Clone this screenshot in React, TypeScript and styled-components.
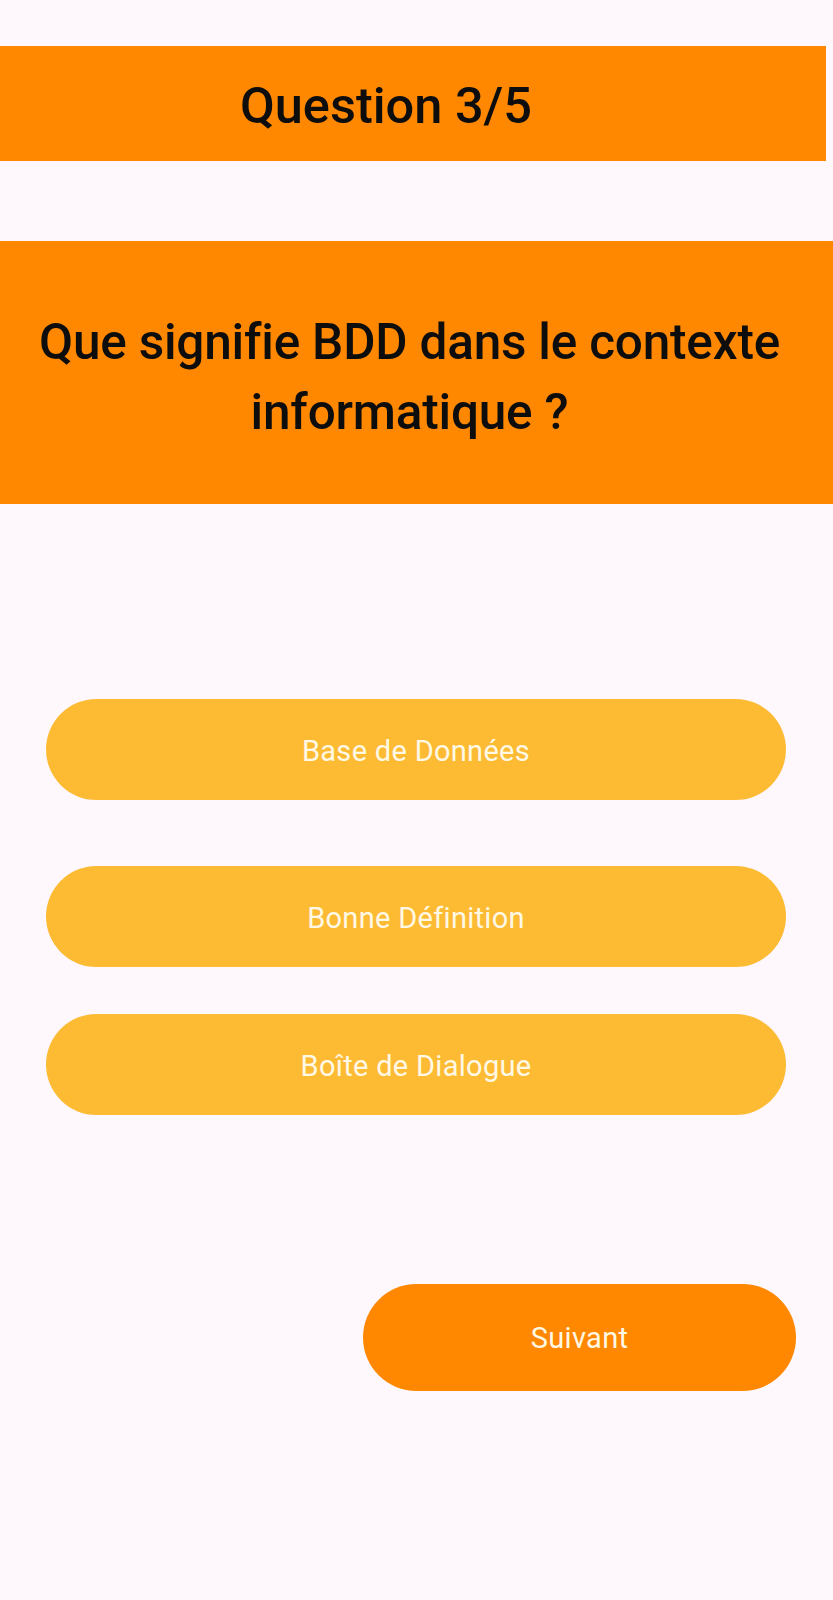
import React from "react";
import styled, { createGlobalStyle } from "styled-components";

const GlobalStyle = createGlobalStyle`
  html, body {
    margin: 0;
    padding: 0;
    background: #fef7fc;
  }
  body {
    font-family: "Roboto", "Noto Sans", sans-serif;
  }
  * { box-sizing: border-box; }
`;

const Page = styled.main`
  width: 833px;
  min-height: 1600px;
  background: #fef7fc;
  display: flex;
  flex-direction: column;
  padding-top: 46px;
`;

const HeaderBar = styled.header`
  width: 826px;
  height: 115px;
  background: #ff8800;
  display: flex;
  align-items: center;
  justify-content: center;
  padding-right: 54px;
  padding-top: 5px;
`;

const HeaderTitle = styled.h1`
  margin: 0;
  font-family: "Roboto", sans-serif;
  font-weight: 500;
  font-size: 50.5px;
  line-height: 1;
  letter-spacing: 0;
  color: #0d0d0d;
`;

const QuestionBox = styled.section`
  margin-top: 80px;
  width: 833px;
  height: 263px;
  background: #ff8800;
  padding: 66px 14px 0 0;
  display: flex;
  justify-content: center;
`;

const QuestionText = styled.h2`
  margin: 0;
  font-family: "Roboto", sans-serif;
  font-weight: 500;
  font-size: 49.5px;
  line-height: 70px;
  letter-spacing: -0.2px;
  text-align: center;
  color: #0d0d0d;
  max-width: 780px;
`;

const Options = styled.div`
  display: flex;
  flex-direction: column;
  padding: 0 47px 0 46px;
  margin-top: 195px;
`;

const OptionButton = styled.button<{ $top: number }>`
  margin-top: ${(p) => p.$top}px;
  height: 101px;
  width: 100%;
  border: none;
  border-radius: 51px;
  background: #fdbb34;
  color: #fff8e4;
  font-family: "Roboto", sans-serif;
  font-weight: 400;
  font-size: 29px;
  letter-spacing: 0.3px;
  padding-top: 3px;
  display: flex;
  align-items: center;
  justify-content: center;
  cursor: pointer;
`;

const FooterRow = styled.div`
  display: flex;
  justify-content: flex-end;
  padding-right: 37px;
  margin-top: 169px;
`;

const NextButton = styled.button`
  width: 433px;
  height: 107px;
  border: none;
  border-radius: 54px;
  background: #ff8800;
  color: #fff8e4;
  font-family: "Roboto", sans-serif;
  font-weight: 400;
  font-size: 29px;
  letter-spacing: 0.3px;
  display: flex;
  align-items: center;
  justify-content: center;
  cursor: pointer;
`;

const options = [
  { label: "Base de Données", top: 0 },
  { label: "Bonne Définition", top: 66 },
  { label: "Boîte de Dialogue", top: 47 },
];

export default function App() {
  return (
    <>
      <GlobalStyle />
      <Page>
        <HeaderBar>
          <HeaderTitle>Question 3/5</HeaderTitle>
        </HeaderBar>
        <QuestionBox>
          <QuestionText>
            Que signifie BDD dans le contexte
            <br />
            informatique ?
          </QuestionText>
        </QuestionBox>
        <Options>
          {options.map((o) => (
            <OptionButton key={o.label} $top={o.top}>
              {o.label}
            </OptionButton>
          ))}
        </Options>
        <FooterRow>
          <NextButton>Suivant</NextButton>
        </FooterRow>
      </Page>
    </>
  );
}
